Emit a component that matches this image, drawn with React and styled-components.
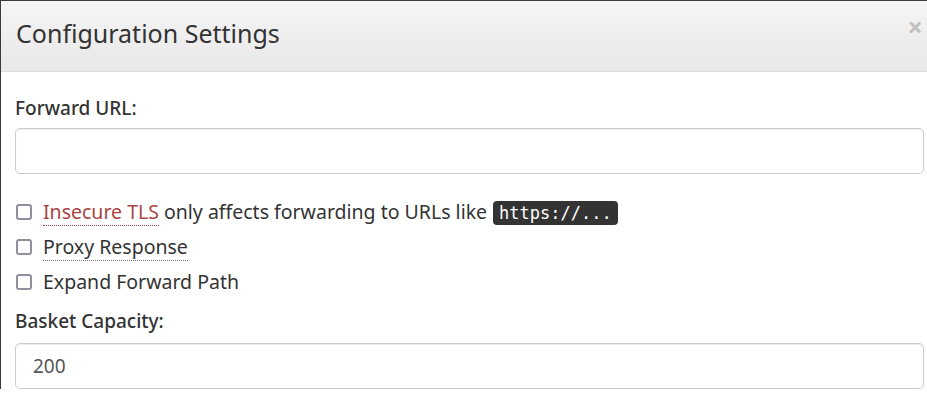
import React from 'react';
import styled, { createGlobalStyle } from 'styled-components';

const GlobalStyle = createGlobalStyle`
  html, body {
    margin: 0;
    padding: 0;
    background: #fff;
    overflow: hidden;
  }
  body {
    font-family: 'Noto Sans', 'Open Sans', sans-serif;
    color: #333;
  }
`;

const Modal = styled.div`
  width: 938px;
  border-top: 1px solid #3a3a3a;
  border-left: 1px solid #3a3a3a;
  background: #fff;
  box-sizing: border-box;
`;

const Header = styled.div`
  display: flex;
  align-items: flex-start;
  justify-content: space-between;
  height: 71px;
  padding: 13px 15px 0 15px;
  box-sizing: border-box;
  background: linear-gradient(to bottom, #f5f5f5 0%, #e8e8e8 100%);
  border-bottom: 1px solid #dcdcdc;
`;

const Title = styled.h4`
  margin: 0;
  font-size: 25px;
  font-weight: 400;
  line-height: 38px;
  color: #333;
`;

const Close = styled.button`
  border: 0;
  background: none;
  padding: 0;
  margin-top: -1px;
  font-family: 'Open Sans', sans-serif;
  font-size: 27px;
  font-weight: 700;
  line-height: 1;
  color: #000;
  opacity: 0.2;
  cursor: pointer;
`;

const Body = styled.div`
  padding: 22px 14px 0 14px;
`;

const Label = styled.label`
  display: block;
  font-size: 19px;
  font-weight: 500;
  line-height: 28px;
  margin-bottom: ${(p) => p.$mb}px;
`;

const Input = styled.input`
  display: block;
  width: 100%;
  height: 46px;
  box-sizing: border-box;
  padding: 10px 17px;
  font-family: 'Noto Sans', sans-serif;
  font-size: 19px;
  color: #555;
  border: 1px solid #ccc;
  border-radius: 5px;
  box-shadow: inset 0 1px 1px rgba(0, 0, 0, 0.075);
  outline: none;
  margin-bottom: ${(p) => p.$gap || 0}px;
`;

const CheckList = styled.div`
  display: flex;
  flex-direction: column;
  gap: 8px;
  margin-bottom: 12px;
`;

const CheckRow = styled.label`
  display: flex;
  align-items: center;
  gap: 11px;
  font-size: 19.5px;
  line-height: 27px;
  padding-left: 1px;
`;

const Box = styled.span`
  width: 12px;
  height: 12px;
  border: 2px solid #8f8f9d;
  border-radius: 3px;
  flex: none;
`;

const Abbr = styled.abbr`
  text-decoration: none;
  border-bottom: 1px dotted ${(p) => p.$color || '#777'};
  color: ${(p) => p.$text || 'inherit'};
  line-height: 23px;
  cursor: help;
`;

const Code = styled.code`
  font-family: 'DejaVu Sans Mono', monospace;
  font-size: 17px;
  line-height: 23px;
  color: #fff;
  background: #333;
  border-radius: 4px;
  padding: 2px 6px;
  margin-left: 6px;
`;

const Check = ({ children }) => (
  <CheckRow>
    <Box />
    <span>{children}</span>
  </CheckRow>
);

export default function App() {
  return (
    <>
      <GlobalStyle />
      <Modal>
        <Header>
          <Title>Configuration Settings</Title>
          <Close aria-label="Close">×</Close>
        </Header>
        <Body>
          <Label $mb={6}>Forward URL:</Label>
          <Input $gap={24} />
          <CheckList>
            <Check>
              <Abbr $color="#a94442" $text="#a94442">Insecure TLS</Abbr> only affects
              forwarding to URLs like<Code>https://...</Code>
            </Check>
            <Check>
              <Abbr>Proxy Response</Abbr>
            </Check>
            <Check>Expand Forward Path</Check>
          </CheckList>
          <Label $mb={8}>Basket Capacity:</Label>
          <Input defaultValue="200" />
        </Body>
      </Modal>
    </>
  );
}
